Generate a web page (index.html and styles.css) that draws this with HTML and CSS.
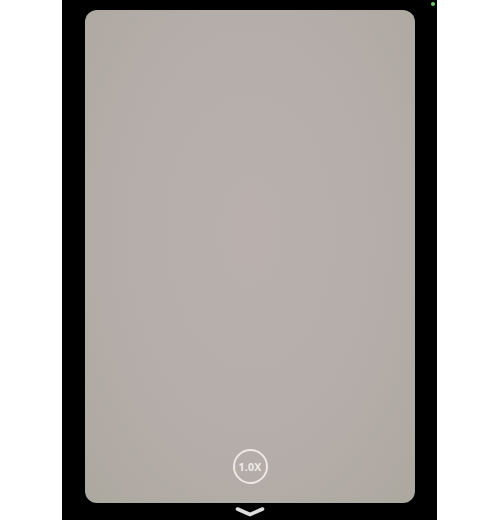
FILE: index.html
```html
<!DOCTYPE html>
<html>
<head>
<meta charset="utf-8">
<link rel="stylesheet" href="styles.css">
</head>
<body>
<div class="stage">
  <div class="frame">
    <div class="viewfinder">
      <div class="zoom-btn">1.0X</div>
    </div>
    <div class="handle">
      <svg width="32" height="14" viewBox="0 0 32 14"><path d="M3.5 4 L16 9.5 L28.5 4" fill="none" stroke="#dedede" stroke-width="3.6" stroke-linecap="round" stroke-linejoin="round"/></svg>
    </div>
    <span class="dot"></span>
  </div>
</div>
</body>
</html>
```
FILE: styles.css
```css
html, body { margin: 0; padding: 0; background: #fff; }
.stage { width: 500px; height: 520px; display: flex; justify-content: center; }
.frame {
  position: relative;
  width: 375px; height: 520px; margin-left: -1px;
  background: #000;
  box-sizing: border-box;
  padding: 10px 22px 0 23px;
  display: flex; flex-direction: column; align-items: center;
}
.viewfinder {
  width: 330px; height: 493px; flex: none;
  border-radius: 12px;
  background: radial-gradient(ellipse at 50% 45%, #b9b0ae 0%, #b6aeab 50%, #aca89f 100%);
  display: flex; flex-direction: column; justify-content: flex-end; align-items: center;
  padding-bottom: 19px; box-sizing: border-box;
}
.zoom-btn {
  width: 35px; height: 35px; border-radius: 50%;
  border: 2px solid #ece9e6; box-sizing: border-box;
  color: #efecea;
  font-family: "Open Sans", "Liberation Sans", sans-serif;
  font-weight: 700; font-size: 10.5px; letter-spacing: 0.2px;
  display: flex; align-items: center; justify-content: center;
}
.handle { height: 17px; display: flex; align-items: center; justify-content: center; }
.handle svg { display: block; }
.dot {
  position: absolute; right: 2px; top: 2px;
  width: 4px; height: 4px; border-radius: 50%; background: #6fcf6a;
}
```
